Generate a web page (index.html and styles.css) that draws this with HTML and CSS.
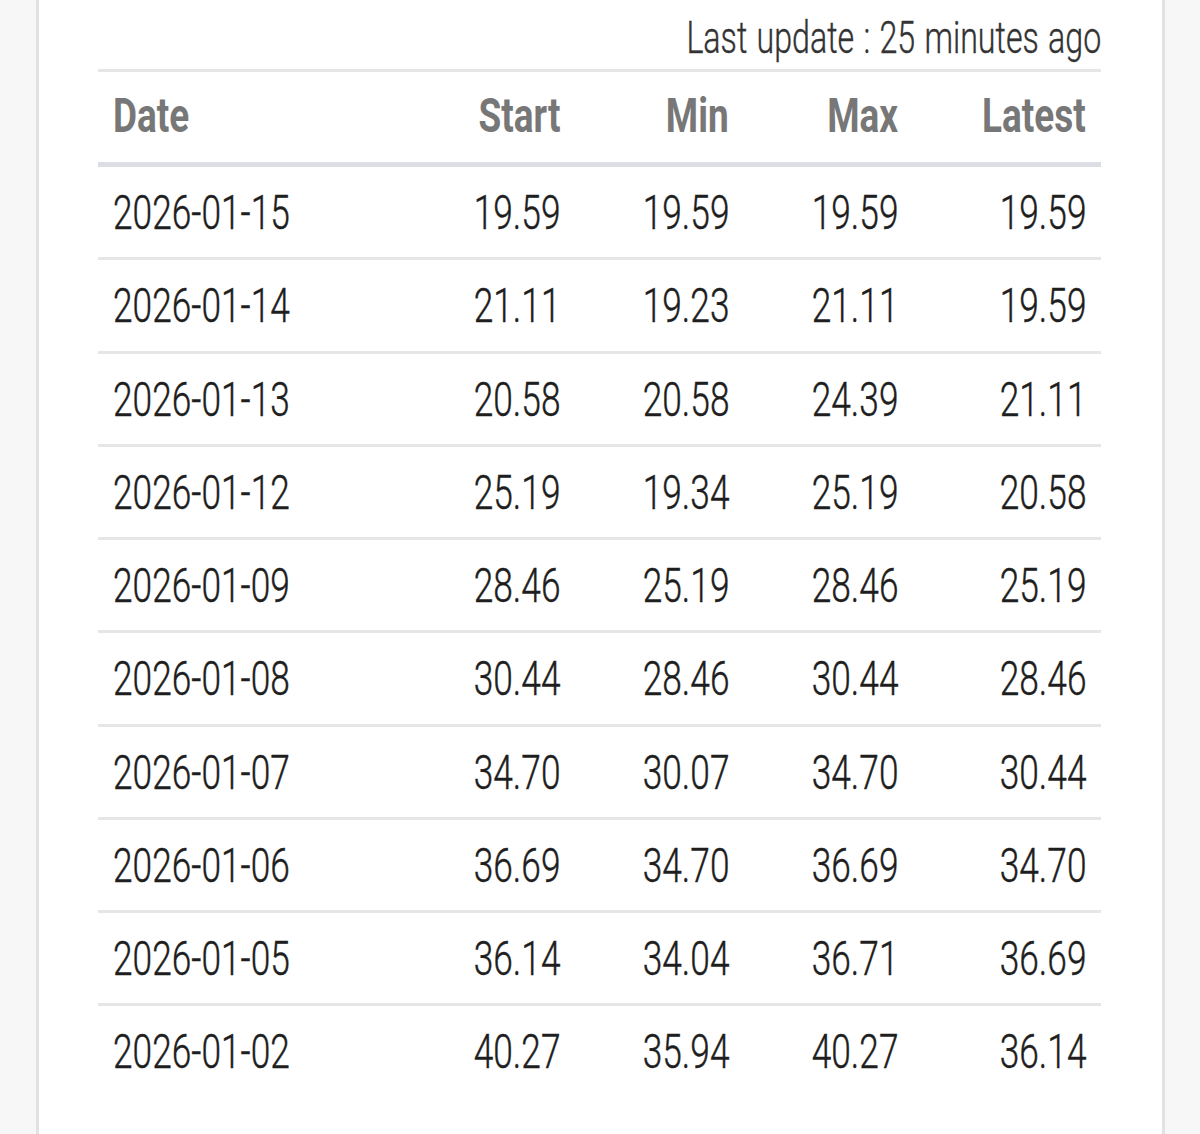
FILE: index.html
```html
<!DOCTYPE html>
<html lang="en">
<head>
<meta charset="utf-8">
<title>Price history</title>
<link rel="stylesheet" href="styles.css">
</head>
<body>
<main class="panel">
  <section class="history">
    <div class="updated"><span class="cond right">Last update : 25 minutes ago</span></div>
    <table class="prices">
      <colgroup>
        <col class="col-date"><col class="col-num"><col class="col-num"><col class="col-num"><col class="col-last">
      </colgroup>
      <thead>
        <tr>
          <th class="date"><span class="cond left">Date</span></th>
          <th class="num"><span class="cond right">Start</span></th>
          <th class="num"><span class="cond right">Min</span></th>
          <th class="num"><span class="cond right">Max</span></th>
          <th class="num last"><span class="cond right">Latest</span></th>
        </tr>
      </thead>
      <tbody>
        <tr><td class="date"><span class="cond left">2026-01-15</span></td><td class="num"><span class="cond right">19.59</span></td><td class="num"><span class="cond right">19.59</span></td><td class="num"><span class="cond right">19.59</span></td><td class="num last"><span class="cond right">19.59</span></td></tr>
        <tr><td class="date"><span class="cond left">2026-01-14</span></td><td class="num"><span class="cond right">21.11</span></td><td class="num"><span class="cond right">19.23</span></td><td class="num"><span class="cond right">21.11</span></td><td class="num last"><span class="cond right">19.59</span></td></tr>
        <tr><td class="date"><span class="cond left">2026-01-13</span></td><td class="num"><span class="cond right">20.58</span></td><td class="num"><span class="cond right">20.58</span></td><td class="num"><span class="cond right">24.39</span></td><td class="num last"><span class="cond right">21.11</span></td></tr>
        <tr><td class="date"><span class="cond left">2026-01-12</span></td><td class="num"><span class="cond right">25.19</span></td><td class="num"><span class="cond right">19.34</span></td><td class="num"><span class="cond right">25.19</span></td><td class="num last"><span class="cond right">20.58</span></td></tr>
        <tr><td class="date"><span class="cond left">2026-01-09</span></td><td class="num"><span class="cond right">28.46</span></td><td class="num"><span class="cond right">25.19</span></td><td class="num"><span class="cond right">28.46</span></td><td class="num last"><span class="cond right">25.19</span></td></tr>
        <tr><td class="date"><span class="cond left">2026-01-08</span></td><td class="num"><span class="cond right">30.44</span></td><td class="num"><span class="cond right">28.46</span></td><td class="num"><span class="cond right">30.44</span></td><td class="num last"><span class="cond right">28.46</span></td></tr>
        <tr><td class="date"><span class="cond left">2026-01-07</span></td><td class="num"><span class="cond right">34.70</span></td><td class="num"><span class="cond right">30.07</span></td><td class="num"><span class="cond right">34.70</span></td><td class="num last"><span class="cond right">30.44</span></td></tr>
        <tr><td class="date"><span class="cond left">2026-01-06</span></td><td class="num"><span class="cond right">36.69</span></td><td class="num"><span class="cond right">34.70</span></td><td class="num"><span class="cond right">36.69</span></td><td class="num last"><span class="cond right">34.70</span></td></tr>
        <tr><td class="date"><span class="cond left">2026-01-05</span></td><td class="num"><span class="cond right">36.14</span></td><td class="num"><span class="cond right">34.04</span></td><td class="num"><span class="cond right">36.71</span></td><td class="num last"><span class="cond right">36.69</span></td></tr>
        <tr><td class="date"><span class="cond left">2026-01-02</span></td><td class="num"><span class="cond right">40.27</span></td><td class="num"><span class="cond right">35.94</span></td><td class="num"><span class="cond right">40.27</span></td><td class="num last"><span class="cond right">36.14</span></td></tr>
      </tbody>
    </table>
  </section>
</main>
</body>
</html>
```

FILE: styles.css
```css
html, body {
  margin: 0;
  padding: 0;
}

body {
  background: #f7f7f7;
  font-family: Roboto, "Liberation Sans", sans-serif;
  color: #222;
  overflow: hidden;
  height: 1134px;
}

.panel {
  margin-left: 36px;
  width: 1123px;
  height: 1134px;
  background: #ffffff;
  border-left: 3px solid #e2e2e2;
  border-right: 3px solid #e2e2e2;
}

.history {
  margin-left: 59px;
  width: 1003px;
}

.cond {
  display: inline-block;
  white-space: nowrap;
  transform: scaleX(0.72);
}

.cond.left {
  transform-origin: left center;
}

.cond.right {
  transform-origin: right center;
}

.updated {
  text-align: right;
  padding-top: 12px;
  padding-bottom: 5px;
  font-size: 45px;
  font-weight: 300;
  line-height: 52px;
  color: #333333;
  -webkit-text-stroke: 0.4px #333333;
  word-spacing: 2px;
}

.updated .cond {
  transform: scaleX(0.715);
}

.prices {
  width: 1003px;
  table-layout: fixed;
  border-collapse: collapse;
  border-top: 3px solid #e6e6e6;
}

.col-date { width: 308px; }
.col-num { width: 169px; }
.col-last { width: 188px; }

.prices th {
  font-size: 48px;
  font-weight: 700;
  color: #777777;
  height: 87px;
  line-height: 87px;
  padding: 0 15px 3px;
  border-bottom: 5px solid #dcdee3;
  vertical-align: top;
}

.prices th .cond {
  transform: scaleX(0.77);
}

.prices td {
  font-size: 49px;
  font-weight: 300;
  color: #1e1e1e;
  -webkit-text-stroke: 0.45px #1e1e1e;
  height: 88.25px;
  line-height: 88.25px;
  padding: 2px 15px 0;
  border-bottom: 3px solid #e6e6e6;
  vertical-align: top;
}

.prices tbody tr:last-child td {
  border-bottom: none;
}

.prices .date {
  text-align: left;
}

.prices .num {
  text-align: right;
}

.prices .last {
  padding-right: 15px;
}
```
